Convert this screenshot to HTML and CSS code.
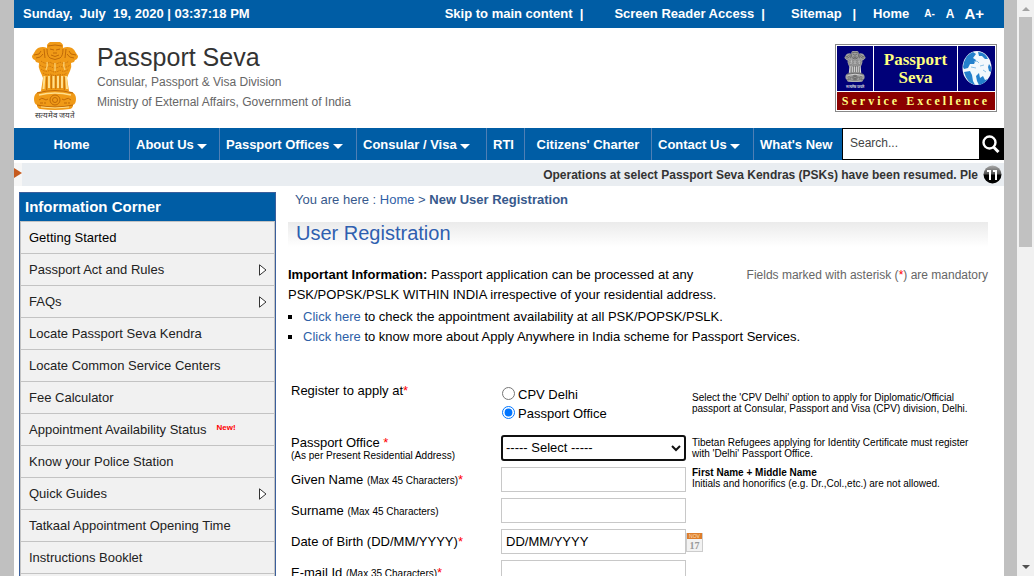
FILE: index.html
```html
<!DOCTYPE html>
<html lang="en">
<head>
<meta charset="utf-8">
<title>Passport Seva - User Registration</title>
<link rel="stylesheet" href="styles.css">
</head>
<body>
<svg class="defs" width="0" height="0" aria-hidden="true">
  <defs>
    <symbol id="emblem" viewBox="0 0 48 68">
      <path d="M16 3q1-2 3-3h10q2 1 3 3v3q4-2 9 0 3 2 4 5l2 3q0 3-3 4l-1 2-3 1q1 4-1 8-2 4-3 7l2 13H10l2-13q-1-3-3-7-2-4-1-8l-3-1-1-2q-3-1-3-4l2-3q1-3 4-5 5-2 9 0z" fill="currentColor"/>
      <path d="M17 4q7-2 14 0M16 7q0 7 3 9 5 3 10 0 3-2 3-9M19 7l4 1M29 7l-4 1M22 11h4M20 13q4 3 8 0M3 13l5-1 2-3M45 13l-5-1-2-3M5 16q5 0 7-4M43 16q-5 0-7-4M13 7l1 9M35 7l-1 9" fill="none" stroke="var(--dark)"/>
      <path d="M10 19q5 4 9 1 5 4 10 0 4 3 9-1M9 23q5 4 10 1 5 4 10 0 5 3 10-1M10 27q5 4 9 1 5 4 10 0 4 3 9-1M12 31q4 3 8 1 4 3 8 0 4 2 8-1" fill="none" stroke="var(--dark)" stroke-dasharray="1.500 1" opacity=".8"/>
      <path d="M16 20q1 4-1 8M33 20q-1 4 1 8M24 21v8" stroke="var(--light)" fill="none" stroke-width="1.500" opacity=".7"/>
      <path d="M13.500 34l-1 13M18 34v12M22.500 34v12M27 34v12M31 34v12M35 34l1 13" stroke="var(--light)" stroke-width="2"/>
      <path d="M15.700 35v13M20.300 33v14M24.800 33v14M29 33v14M33.300 35v13" stroke="var(--dark)" stroke-width=".9"/>
      <path d="M7 50q17-5 34 0 4 2 4 7t-3 6q0 3-3 4-15 2-30 0-3-1-3-4-3-1-3-6t4-7z" fill="currentColor"/>
      <path d="M8 53q16-4 32 0" fill="none" stroke="var(--light)" stroke-width="1.300"/>
      <circle cx="24" cy="58" r="5" fill="none" stroke="var(--dark)"/>
      <circle cx="24" cy="58" r="2.500" fill="none" stroke="var(--dark)"/>
      <path d="M8 58q3-3 5-1t4 0M31 57q2 2 4 0t5 1M9 61h3M14 60v2M33 61h3M38 60v2M6 63q18 4 36 0M6 51q18-5 36 0" fill="none" stroke="var(--dark)"/>
      <path d="M10 65q14 2 28 0" fill="none" stroke="var(--light)"/>
    </symbol>
  </defs>
</svg>
<div class="window">
  <div class="page">
    <div class="topbar">
      <span class="clock">Sunday,&nbsp; July&nbsp; 19, 2020 | 03:37:18 PM</span>
      <nav class="quick" aria-label="Quick links">
        <a class="skip" href="#main">Skip to main content&nbsp; |</a>
        <a class="reader" href="#reader">Screen Reader Access&nbsp; |</a>
        <a class="sitemap" href="#sitemap">Sitemap&nbsp;&nbsp; |</a>
        <a class="home" href="#home">Home</a>
        <button class="size small" type="button">A-</button>
        <button class="size medium" type="button">A</button>
        <button class="size large" type="button">A+</button>
      </nav>
    </div>
    <header class="masthead">
      <div class="crest">
        <svg class="crest-art" aria-hidden="true"><use href="#emblem"/></svg>
        <span lang="hi">सत्यमेव जयते</span>
      </div>
      <div class="brand">
        <div class="brand-name">Passport Seva</div>
        <div class="brand-line">Consular, Passport &amp; Visa Division</div>
        <div class="brand-line">Ministry of External Affairs, Government of India</div>
      </div>
      <div class="badge">
        <div class="badge-crest">
          <svg class="badge-art" aria-hidden="true"><use href="#emblem"/></svg>
          <span lang="hi">सत्यमेव जयते</span>
        </div>
        <div class="badge-name">Passport<br>Seva</div>
        <div class="badge-globe">
          <svg width="30" height="38" viewBox="0 0 30 38" aria-hidden="true">
            <ellipse cx="15" cy="18" rx="14.500" ry="17" fill="#f2f8fc"/>
            <path d="M2 12q3-8 9-10l3 2-3 4 3 2-2 4-4 0-2 4-4 1-1-2zM16 2q7 0 10 7l-3 0-3-3-3 0zM2 22l6-1 2 4 1 6 2 4q-8-2-11-13zM14 26l3-3 1 5 3-2 2 4 3-1q-4 5-9 6l-2-4zM27 14l2 3v5l-2-1-1-4z" fill="#2480cc"/>
            <path d="M12 12l3-1 2 2M18 16l4-1M9 17l5 1M21 20l3 2" fill="none" stroke="#8fc2e6"/>
          </svg>
        </div>
        <div class="badge-tag">Service Excellence</div>
      </div>
    </header>
    <nav class="menu" aria-label="Main menu">
      <a class="centered" href="#home">Home</a>
      <a href="#about">About Us <i class="caret"></i></a>
      <a href="#offices">Passport Offices <i class="caret"></i></a>
      <a href="#consular">Consular / Visa <i class="caret"></i></a>
      <a href="#rti">RTI</a>
      <a class="centered" href="#charter">Citizens' Charter</a>
      <a href="#contact">Contact Us <i class="caret"></i></a>
      <a href="#new">What's New</a>
      <form class="search">
        <input type="text" placeholder="Search..." aria-label="Search">
        <button type="button" aria-label="Search">
          <svg width="18" height="18" viewBox="0 0 18 18"><circle cx="7.500" cy="7.500" r="6" fill="none" stroke="#fff" stroke-width="2.400"/><path d="M11.500 12l5 5" stroke="#fff" stroke-width="3"/></svg>
        </button>
      </form>
    </nav>
    <div class="ticker">
      <svg class="ticker-mark" width="8" height="23" viewBox="0 0 8 23" aria-hidden="true"><path fill="#f6f6f6" d="M0 0h8v23H0z"/><path fill="#c65b1f" d="M0 5l8 5-8 5z"/></svg>
      <span class="ticker-text">Operations at select Passport Seva Kendras (PSKs) have been resumed. Ple</span>
      <button class="pause" type="button" aria-label="Pause">
        <svg width="19" height="19" viewBox="0 0 19 19">
          <defs><linearGradient id="pg" x2="0" y2="1"><stop offset="0" stop-color="#aaa"/><stop offset=".45" stop-color="#555"/><stop offset=".55" stop-color="#000"/></linearGradient></defs>
          <circle cx="9.500" cy="9.500" r="9" fill="url(#pg)"/><path d="M4 5h4v10H6V7H4zM10 5h4v10h-2V7h-2z" fill="#fff"/>
        </svg>
      </button>
    </div>
    <div class="columns">
      <aside class="sidebar">
        <h2>Information Corner</h2>
        <ul>
          <li class="current"><a href="#1">Getting Started</a></li>
          <li><a href="#2">Passport Act and Rules</a><svg class="arrow" viewBox="0 0 8 12"><path d="M.5.8v10.400L7 6z"/></svg></li>
          <li><a href="#3">FAQs</a><svg class="arrow" viewBox="0 0 8 12"><path d="M.5.8v10.400L7 6z"/></svg></li>
          <li><a href="#4">Locate Passport Seva Kendra</a></li>
          <li><a href="#5">Locate Common Service Centers</a></li>
          <li><a href="#6">Fee Calculator</a></li>
          <li><a href="#7">Appointment Availability Status</a><span class="new">New!</span></li>
          <li><a href="#8">Know your Police Station</a></li>
          <li><a href="#9">Quick Guides</a><svg class="arrow" viewBox="0 0 8 12"><path d="M.5.8v10.400L7 6z"/></svg></li>
          <li><a href="#10">Tatkaal Appointment Opening Time</a></li>
          <li><a href="#11">Instructions Booklet</a></li>
          <li></li>
        </ul>
      </aside>
      <main class="main" id="main">
        <div class="crumbs">You are here : <a href="#home">Home</a> &gt; <b>New User Registration</b></div>
        <h1>User Registration</h1>
        <div class="intro">
          <p><b>Important Information:</b> Passport application can be processed at any PSK/POPSK/PSLK WITHIN INDIA irrespective of your residential address.</p>
          <span class="mandatory">Fields marked with asterisk (<span class="req">*</span>) are mandatory</span>
        </div>
        <ul class="notes">
          <li><a href="#avail">Click here</a> to check the appointment availability at all PSK/POPSK/PSLK.</li>
          <li><a href="#scheme">Click here</a> to know more about Apply Anywhere in India scheme for Passport Services.</li>
        </ul>
        <form class="form">
          <span class="label" id="reg">Register to apply at<span class="req">*</span></span>
          <div class="radios" role="radiogroup" aria-labelledby="reg">
            <label><input type="radio" name="at">CPV Delhi</label>
            <label><input type="radio" name="at" checked>Passport Office</label>
          </div>
          <p class="hint register">Select the 'CPV Delhi' option to apply for Diplomatic/Official passport at Consular, Passport and Visa (CPV) division, Delhi.</p>

          <label class="label office" for="office">Passport Office <span class="req">*</span><small>(As per Present Residential Address)</small></label>
          <div class="select-box">
            <select id="office"><option>----- Select -----</option></select>
            <svg width="10" height="7" viewBox="0 0 10 7" aria-hidden="true"><path d="M1 1l4 4 4-4" fill="none" stroke="#111" stroke-width="2"/></svg>
          </div>
          <p class="hint middle">Tibetan Refugees applying for Identity Certificate must register with 'Delhi' Passport Office.</p>

          <label class="label" for="given">Given Name <small>(Max 45 Characters)</small><span class="req">*</span></label>
          <input class="field" id="given" type="text">
          <p class="hint"><b>First Name + Middle Name</b><br>Initials and honorifics (e.g. Dr.,Col.,etc.) are not allowed.</p>

          <label class="label" for="surname">Surname <small>(Max 45 Characters)</small></label>
          <input class="field" id="surname" type="text">
          <span></span>

          <label class="label" for="dob">Date of Birth (DD/MM/YYYY)<span class="req">*</span></label>
          <input class="field" id="dob" type="text" value="DD/MM/YYYY">
          <button class="calendar" type="button" aria-label="Choose date">
            <span class="month">NOV</span><span class="day">17</span>
          </button>

          <label class="label" for="email">E-mail Id <small>(Max 35 Characters)</small><span class="req">*</span></label>
          <input class="field" id="email" type="text">
        </form>
      </main>
    </div>
  </div>
  <div class="scrollbar" aria-hidden="true">
    <svg width="8" height="17" viewBox="0 0 8 17"><path d="M0 11l4-4 4 4z" fill="#a3a3a3"/></svg>
    <div class="thumb"></div>
    <svg width="8" height="17" viewBox="0 0 8 17"><path d="M0 6l4 4 4-4z" fill="#505050"/></svg>
  </div>
</div>
</body>
</html>
```

FILE: styles.css
```css
* { box-sizing: border-box; }
body {
  margin: 0;
  background: #c0c0c0;
  color: #000;
  font: 13px/20px "Liberation Sans", Arial, sans-serif;
  overflow: hidden;
}
a { color: #2f5fa7; text-decoration: none; }
button { border: 0; padding: 0; background: none; color: inherit; font: inherit; }
h1, h2, p, ul { margin: 0; padding: 0; }
ul { list-style: none; }
.defs { display: none; }
.window { display: flex; height: 100vh; overflow: hidden; }
.page { flex: 1; min-width: 0; margin: 0 13px 0 14px; background: #fff; }

.topbar {
  display: flex;
  justify-content: space-between;
  align-items: center;
  height: 28px;
  padding: 0 20px 0 9px;
  background: #005da5;
  color: #fff;
  font-weight: bold;
}
.quick { display: flex; align-items: center; }
.quick a { color: #fff; }
.reader { margin-left: 31px; }
.sitemap { margin-left: 26px; }
.home { margin-left: 17px; }
.size.small { margin-left: 15px; font-size: 10px; }
.size.medium { margin-left: 11px; font-size: 12px; }
.size.large { margin-left: 10px; font-size: 15px; }

.masthead { display: flex; height: 100px; padding: 14px 7px 0 17px; }
.crest { width: 48px; text-align: center; font-size: 8px; line-height: 12px; white-space: nowrap; }
.crest span { color: #333; }
.crest-art { display: block; width: 48px; height: 68px; color: #f09a17; --dark: #c06a08; --light: #ffdf8c; }
.brand { flex: 1; padding: 1px 0 0 18px; color: #666; font-size: 12px; }
.brand-name { color: #333; font-size: 25px; line-height: 29px; }
.badge {
  display: grid;
  grid-template-columns: 36px 1fr 37px;
  grid-template-rows: 45px 18px;
  gap: 1px;
  width: 162px;
  height: 68px;
  margin-top: 2px;
  border: 1px solid #888;
  padding: 1px;
  background: #fff;
  color: #ffff80;
  font-family: "Liberation Serif", "Times New Roman", serif;
  font-weight: bold;
  text-align: center;
}
.badge-crest, .badge-name, .badge-globe { background: #000078; }
.badge-crest { padding-top: 4px; font-size: 4px; line-height: 7px; color: #ddd; }
.badge-art { display: block; width: 22px; height: 33px; margin: 0 auto; color: #a0a0a0; --dark: #303030; --light: #eee; }
.badge-name { padding-top: 5px; font-size: 17px; line-height: 18px; }
.badge-globe { padding-top: 4px; line-height: 0; }
.badge-tag { grid-column: 1 / -1; background: #8b0000; font-size: 12px; line-height: 18px; letter-spacing: 3px; white-space: nowrap; }

.menu {
  display: grid;
  grid-template-columns: 115fr 90fr 137fr 130fr 38fr 127fr 102fr 89fr 162fr;
  height: 32px;
  background: #005da5;
  font-weight: bold;
  line-height: 33px;
}
.menu a { min-width: 0; height: 32px; padding-left: 6px; border-left: 1px solid #4f7fb5; color: #fff; white-space: nowrap; }
.menu a:first-child { border-left: 0; }
.menu .centered { padding: 0; text-align: center; }
.caret {
  display: inline-block;
  border: 5px solid transparent;
  border-top-color: #fff;
  border-bottom: 0;
}
.search { display: flex; min-width: 0; border: 1px solid #000; background: #000; }
.search input { flex: 1; min-width: 0; border: 0; padding: 0 7px 2px; background: #fff; color: #444; font: 12px "Liberation Sans", Arial, sans-serif; }
.search input::placeholder { color: #444; opacity: 1; }
.search button { width: 24px; line-height: 0; }

.ticker { display: flex; justify-content: space-between; align-items: center; height: 23px; margin-top: 3px; padding-right: 2px; background: #e9edf1; }
.ticker-text { margin-left: auto; color: #333; font-size: 12px; font-weight: bold; line-height: 22px; white-space: nowrap; }
.pause { margin-left: 5px; line-height: 0; }

.columns { display: flex; padding: 6px 16px 0 5px; }
.sidebar { width: 257px; border: 1px solid #3a5f9c; }
.sidebar h2 { padding-left: 5px; background: #005da5; color: #fff; font-size: 15px; line-height: 28px; }
.sidebar ul { border: 1px solid #c3c3c3; }
.sidebar li { display: flex; align-items: center; height: 32px; padding: 0 7px 0 8px; border-bottom: 1px solid #c3c3c3; background: #f1f1f1; }
.sidebar a { color: #222; }
.sidebar .current a { color: #000; }
.arrow { width: 8px; height: 12px; margin-left: auto; fill: #fff; stroke: #333; }
.new { margin: 0 0 4px 10px; color: #f00; font-size: 8px; font-weight: bold; line-height: 12px; }

.main { flex: 1; min-width: 0; padding-left: 12px; }
.crumbs { padding-left: 7px; height: 30px; line-height: 16px; color: #37598c; }
h1 { height: 25px; padding-left: 8px; background: linear-gradient(#ebebeb, #fff); color: #2f5fb0; font-size: 20px; font-weight: normal; line-height: 23px; }
.intro { display: flex; justify-content: space-between; padding-top: 18px; }
.intro p { width: 430px; }
.mandatory { color: #666; font-size: 12px; white-space: nowrap; }
.req { color: #f00; }
.notes { padding-top: 2px; }
.notes li { padding-left: 15px; background: linear-gradient(#000, #000) 0 8px / 4px 4px no-repeat; }

.form {
  display: grid;
  grid-template-columns: 210px 185px 1fr;
  row-gap: 6px;
  padding: 34px 0 0 3px;
}
.label { line-height: 25px; }
#reg { line-height: 20px; }
.label small, .hint { font-size: 10px; line-height: 11px; }
.radios { height: 48px; padding-top: 4px; }
.radios label { display: flex; align-items: center; height: 19px; }
.radios input { width: 13px; height: 13px; margin: 0 3px 3px 1px; accent-color: #0075ff; }
.hint { padding-left: 6px; padding-right: 10px; }
.hint.middle { padding-top: 2px; }
.hint.register { padding-top: 11px; }
.office { height: 26px; line-height: 15px; }
.office small { display: block; }
.select-box { display: flex; align-items: center; position: relative; height: 26px; }
.select-box select {
  width: 100%;
  height: 26px;
  border: 2px solid #101010;
  border-radius: 3px;
  padding: 0 3px;
  background: #fff;
  color: #000;
  font: inherit;
  appearance: none;
}
.select-box svg { position: absolute; right: 5px; pointer-events: none; }
.field { width: 185px; height: 25px; border: 1px solid #c8c8c8; padding: 0 4px; background: #fff; color: #000; font: inherit; }
.calendar { display: flex; flex-direction: column; align-self: start; width: 17px; height: 19px; margin-top: 4px; border: 1px solid #ccc; border-top: 0; background: #f2f2f2; font: bold 10px/13px "Liberation Serif", serif; color: #999; }
.month { align-self: stretch; background: #dd7d2b; color: #ffe0bd; font: 5px/6px "Liberation Sans", sans-serif; }
.day { align-self: center; }

.scrollbar { display: flex; flex-direction: column; align-items: center; width: 17px; background: #f1f1f1; }
.thumb { width: 13px; height: 40%; margin-bottom: auto; background: #c1c1c1; }
```
